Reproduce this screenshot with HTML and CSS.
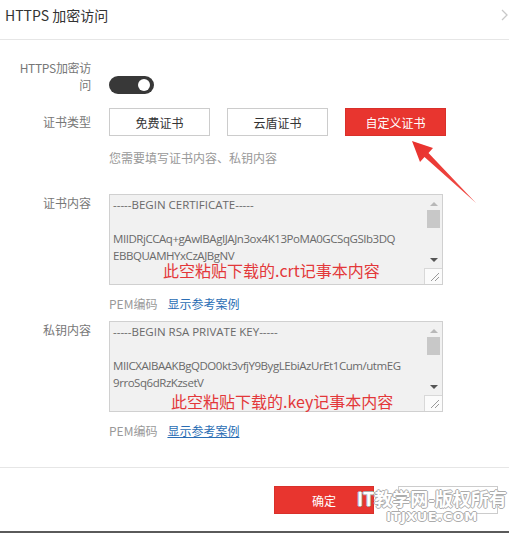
FILE: index.html
```html
<!DOCTYPE html>
<html lang="zh-CN">
<head>
  <meta charset="UTF-8">
  <title>HTTPS 加密访问</title>
  <link rel="stylesheet" href="styles.css">
</head>
<body>
  <div class="dialog">
    <!-- Header -->
    <div class="dialog-head">
      <span class="dialog-title">HTTPS 加密访问</span>
      <svg class="close" width="7" height="12" viewBox="0 0 7 12"><path d="M1 1 L6 6 L1 11" fill="none" stroke="#c8c8c8" stroke-width="1.3"/></svg>
    </div>

    <!-- Form -->
    <div class="dialog-body">
      <div class="form-row">
        <div class="form-label label-wrap">HTTPS加密访问</div>
        <div class="form-field">
          <span class="switch"><i></i></span>
        </div>
      </div>

      <div class="form-row row-type">
        <div class="form-label label-mid">证书类型</div>
        <div class="form-field">
          <div class="btn-group">
            <button class="btn">免费证书</button>
            <button class="btn">云盾证书</button>
            <button class="btn btn-red">自定义证书</button>
          </div>
          <p class="tip">您需要填写证书内容、私钥内容</p>
        </div>
      </div>

      <div class="form-row row-cert">
        <div class="form-label">证书内容</div>
        <div class="form-field">
          <div class="code-box">
            <div class="code-text"><span class="pem-head">-----BEGIN CERTIFICATE-----</span>

MIIDRjCCAq+gAwIBAgIJAJn3ox4K13PoMA0GCSqGSIb3DQ
EBBQUAMHYxCzAJBgNV</div>
            <div class="scrollbar">
              <span class="sb-btn"><i class="tri-up"></i></span>
              <span class="sb-track"><i class="sb-thumb"></i></span>
              <span class="sb-btn"><i class="tri-down"></i></span>
              <span class="sb-corner"><svg width="10" height="10" viewBox="0 0 10 10"><path d="M9 1 L1 9 M9 5 L5 9" stroke="#999" stroke-width="1"/></svg></span>
            </div>
            <span class="note note-crt">此空粘贴下载的.crt记事本内容</span>
          </div>
          <p class="hint">PEM编码<a href="#">显示参考案例</a></p>
        </div>
      </div>

      <div class="form-row row-key">
        <div class="form-label">私钥内容</div>
        <div class="form-field">
          <div class="code-box">
            <div class="code-text"><span class="pem-head">-----BEGIN RSA PRIVATE KEY-----</span>

MIICXAIBAAKBgQDO0kt3vfjY9BygLEbiAzUrEt1Cum/utmEG
9rroSq6dRzKzsetV</div>
            <div class="scrollbar">
              <span class="sb-btn"><i class="tri-up"></i></span>
              <span class="sb-track"><i class="sb-thumb"></i></span>
              <span class="sb-btn"><i class="tri-down"></i></span>
              <span class="sb-corner"><svg width="10" height="10" viewBox="0 0 10 10"><path d="M9 1 L1 9 M9 5 L5 9" stroke="#999" stroke-width="1"/></svg></span>
            </div>
            <span class="note note-key">此空粘贴下载的.key记事本内容</span>
          </div>
          <p class="hint">PEM编码<a href="#" class="hover">显示参考案例</a></p>
        </div>
      </div>
    </div>

    <!-- Footer -->
    <div class="dialog-foot">
      <button class="btn btn-red">确定</button>
      <button class="btn"></button>
    </div>
  </div>

  <!-- Annotation arrow -->
  <svg class="arrow" width="509" height="533" viewBox="0 0 509 533">
    <defs>
      <linearGradient id="ag" x1="0" y1="0" x2="1" y2="1">
        <stop offset="0" stop-color="#e8302c"/>
        <stop offset="1" stop-color="#f0504a"/>
      </linearGradient>
    </defs>
    <polygon points="412,141 433,148 428.5,153 476,203 424.5,157 420,162" fill="url(#ag)"/>
  </svg>

  <!-- Watermark -->
  <div class="watermark">
    <span class="wm-main">IT教学网-版权所有</span>
    <span class="wm-sub">ITJXUE.COM</span>
  </div>
</body>
</html>
```

FILE: styles.css
```css
* {
  margin: 0;
  padding: 0;
  box-sizing: border-box;
}
body {
  font-family: "Noto Sans CJK SC", sans-serif;
  font-size: 12px;
  color: #333;
  background: #fff;
  width: 509px;
  height: 533px;
  overflow: hidden;
  position: relative;
}
button {
  font-family: inherit;
}
/* Dialog frame */
.dialog {
  height: 533px;
  border-bottom: 2px solid #5a5a5a;
  display: flex;
  flex-direction: column;
}
.dialog-head {
  height: 40px;
  border-bottom: 1px solid #e6e6e6;
  display: flex;
  justify-content: space-between;
  padding: 5px 1px 0 5px;
}
.dialog-title {
  font-size: 14px;
  line-height: 20px;
  color: #333;
}
.close {
  margin-top: 4px;
}
.dialog-body {
  flex: 1;
  padding-top: 19px;
}
/* Form rows */
.form-row {
  display: flex;
  gap: 18px;
}
.form-label {
  flex: 0 0 91px;
  padding-left: 17px;
  text-align: right;
  color: #777;
  line-height: 18px;
}
.label-wrap {
  line-height: 17px;
  letter-spacing: -0.3px;
}
.label-mid {
  line-height: 28px;
}
.form-field {
  flex: 1;
}
.row-type {
  margin-top: 14px;
}
.row-cert {
  margin-top: 27px;
}
.row-key {
  margin-top: 8px;
}
/* Switch */
.switch {
  display: block;
  width: 45px;
  height: 18px;
  margin-top: 17px;
  border-radius: 9px;
  background: #383838;
  position: relative;
}
.switch i {
  position: absolute;
  right: 4px;
  top: 3px;
  width: 12px;
  height: 12px;
  border-radius: 50%;
  background: #fff;
}
/* Buttons */
.btn-group {
  display: flex;
  gap: 17px;
}
.btn {
  width: 101px;
  height: 28px;
  border: 1px solid #ccc;
  background: #fff;
  color: #333;
  font-size: 12px;
}
.btn-red {
  background: #e8352f;
  border-color: #d9302a;
  color: #fff;
}
.tip {
  margin-top: 13px;
  line-height: 18px;
  color: #999;
}
/* Fake textarea */
.code-box {
  width: 334px;
  height: 91px;
  border: 1px solid #d0d0d0;
  background: #f1f1f1;
  display: flex;
  position: relative;
}
.code-text {
  flex: 1;
  overflow: hidden;
  padding: 1px 0 0 3px;
  white-space: pre;
  font-family: "Open Sans", sans-serif;
  font-size: 11.5px;
  letter-spacing: -0.45px;
  line-height: 17px;
  color: #6a6a6a;
}
.pem-head {
  letter-spacing: 0;
}
.scrollbar {
  flex: 0 0 17px;
  display: flex;
  flex-direction: column;
}
.sb-btn {
  height: 17px;
  display: flex;
  align-items: center;
  justify-content: center;
}
.sb-track {
  flex: 1;
}
.sb-thumb {
  display: block;
  width: 13px;
  height: 18px;
  margin: -2px 0 0 2px;
  background: #c8c8c8;
}
.tri-up {
  border-left: 4px solid transparent;
  border-right: 4px solid transparent;
  border-bottom: 4px solid #b8b8b8;
}
.tri-down {
  border-left: 4px solid transparent;
  border-right: 4px solid transparent;
  border-top: 4px solid #555;
}
.sb-corner {
  height: 16px;
  margin-left: -1px;
  border-left: 1px solid #d8d8d8;
  border-top: 1px solid #d8d8d8;
  background: #fbfbfb;
  display: flex;
  align-items: flex-end;
  justify-content: flex-end;
  padding: 0 2px 2px 0;
}
.note {
  position: absolute;
  font-size: 16px;
  line-height: 20px;
  color: #e3383a;
  white-space: nowrap;
}
.note-crt {
  left: 53px;
  top: 65px;
}
.note-key {
  left: 61px;
  top: 69px;
}
.hint {
  margin-top: 10px;
  line-height: 18px;
  color: #999;
}
.hint a {
  margin-left: 10px;
  color: #2a6db4;
  text-decoration: none;
}
.hint a.hover {
  text-decoration: underline;
}
/* Footer */
.dialog-foot {
  border-top: 1px solid #e6e6e6;
  display: flex;
  justify-content: flex-end;
  gap: 24px;
  padding: 18px 11px 0 0;
  height: 64px;
}
.dialog-foot .btn {
  width: 100px;
}
/* Overlays */
.arrow {
  position: absolute;
  left: 0;
  top: 0;
  pointer-events: none;
}
.watermark {
  position: absolute;
  left: 357px;
  top: 487px;
  display: flex;
  flex-direction: column;
  align-items: center;
  color: #fff;
  text-shadow: 1px 0 0 #ababab, -1px 0 0 #ababab, 0 1px 0 #ababab, 0 -1px 0 #ababab;
  pointer-events: none;
}
.wm-main {
  font-size: 18px;
  line-height: 22px;
  font-weight: bold;
}
.wm-sub {
  font-family: "DejaVu Sans", sans-serif;
  font-weight: bold;
  font-size: 13px;
  line-height: 15px;
  letter-spacing: 0.5px;
}
```
